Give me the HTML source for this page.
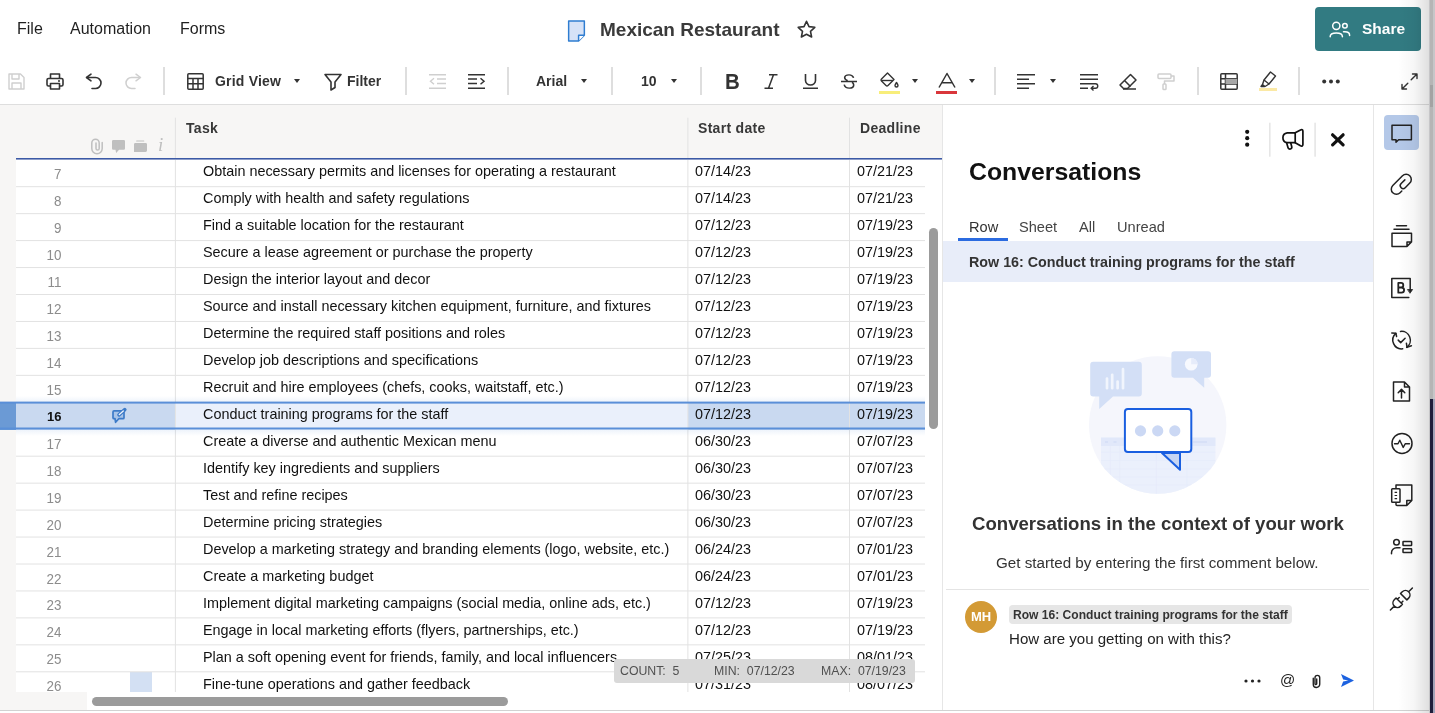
<!DOCTYPE html>
<html>
<head>
<meta charset="utf-8">
<title>Mexican Restaurant</title>
<style>
*{box-sizing:border-box;margin:0;padding:0}
html,body{width:1435px;height:713px;overflow:hidden;background:#fff;font-family:"Liberation Sans",sans-serif;color:#222}
#wrap{position:absolute;left:0;top:0;width:1435px;height:713px;will-change:transform;transform:translateZ(0)}
#top{position:absolute;left:0;top:0;width:1435px;height:105px;background:#fff;border-bottom:1px solid #dedede}
.menu{position:absolute;top:19px;font-size:16px;line-height:19px;color:#1f1f1f;white-space:nowrap}
#title{position:absolute;left:600px;top:18px;font-size:19px;font-weight:bold;line-height:24px;color:#3a3a3a;white-space:nowrap}
#share{position:absolute;left:1315px;top:7px;width:106px;height:44px;background:#327b82;border-radius:4px;color:#fff;font-weight:bold;font-size:15.5px}
#share span{position:absolute;left:47px;top:12px;line-height:19px}
.sep{position:absolute;top:67px;width:2px;height:28px;background:#dedede}
.tbtxt{position:absolute;font-size:14px;font-weight:bold;color:#333;line-height:16px;top:73px;white-space:nowrap}
.caret{position:absolute;top:79px;width:0;height:0;border-left:3.1px solid transparent;border-right:3.1px solid transparent;border-top:4.6px solid #333;margin-left:1px}
svg{position:absolute;overflow:visible}
#gridbg{position:absolute;left:0;top:105px;width:943px;height:606px;background:#f7f6f5}
#gridwhite{position:absolute;left:16px;top:160px;width:909px;height:537px;background:#fff}
.hl{position:absolute;left:16px;height:1px;background:#e4e4e4;width:909px}
.vl{position:absolute;width:1px;background:#e4e4e4}
.rn{transform:scaleY(1.06);transform-origin:0 0;position:absolute;left:16px;width:45.4px;text-align:right;font-size:13.4px;color:#8c8c8c;line-height:15px}
.tk,.d1,.d2{position:absolute;font-size:14.4px;color:#111;line-height:17px;white-space:nowrap}
.tk{left:203px}.d1{left:695px}.d2{left:857px}
.hd{position:absolute;top:120px;font-size:14px;letter-spacing:.3px;font-weight:bold;color:#383838;line-height:16px;white-space:nowrap}
#panel{position:absolute;left:942px;top:105px;width:431px;height:606px;background:#fff}
#rail{position:absolute;left:1373px;top:105px;width:62px;height:606px;background:#fff}
.ptxt{position:absolute;white-space:nowrap}
</style>
</head>
<body>
<div id="wrap">
<div id="top">
  <div class="menu" style="left:17px">File</div>
  <div class="menu" style="left:70px">Automation</div>
  <div class="menu" style="left:180px">Forms</div>
  <!-- sheet icon -->
  <svg style="left:567px;top:20px" width="19" height="22" viewBox="0 0 18 21"><path d="M1.5 1h15v13.5l-5.5 5.5h-9.5z" fill="#d6e2f7" stroke="#2f7dd1" stroke-width="1.4" stroke-linejoin="round"/><path d="M11 20v-5.5h5.5" fill="#fff" stroke="#2f7dd1" stroke-width="1.4" stroke-linejoin="round"/></svg>
  <div id="title">Mexican Restaurant</div>
  <!-- star -->
  <svg style="left:797px;top:20px" width="19" height="18" viewBox="0 0 19 18"><path d="M9.5 1.3l2.5 5.3 5.8.7-4.3 4 1.1 5.7-5.1-2.8-5.1 2.8 1.1-5.7-4.3-4 5.8-.7z" fill="none" stroke="#333" stroke-width="1.6" stroke-linejoin="round"/></svg>
  <div id="share">
    <svg style="left:14px;top:14px" width="22" height="17" viewBox="0 0 22 17" fill="none" stroke="#fff" stroke-width="1.500" stroke-linecap="round"><circle cx="7.300" cy="4.800" r="3.600"/><path d="M1.200 15.700v-.3c0-2.300 2.300-3.500 6.100-3.500s6.100 1.200 6.100 3.500v.3"/><circle cx="15.900" cy="4.800" r="2.300"/><path d="M14.500 10.800h1.400c3 0 4.700 1.300 4.700 3.400v.3"/></svg>
    <span>Share</span>
  </div>
  <!-- save (disabled) -->
  <svg style="left:8px;top:73px" width="17" height="17" viewBox="0 0 17 17" fill="none" stroke="#cfcfcf" stroke-width="1.4" stroke-linejoin="round"><path d="M1 1h11.500l3.500 3.500v11.500h-15z"/><path d="M4 1v5h7v-5"/><path d="M4 16v-6h9v6"/></svg>
  <!-- print -->
  <svg style="left:46px;top:73px" width="18" height="17" viewBox="0 0 18 17" fill="none" stroke="#333" stroke-width="1.600" stroke-linejoin="round"><path d="M4.500 5.500v-4.500h9v4.500"/><rect x="1" y="5.500" width="16" height="7.500" rx="1.500"/><rect x="4.500" y="10.500" width="9" height="5.500" fill="#fff"/><path d="M12 8h2" stroke-width="1.300"/></svg>
  <!-- undo -->
  <svg style="left:85px;top:73px" width="18" height="17" viewBox="0 0 18 17" fill="none" stroke="#333" stroke-width="1.600" stroke-linecap="round" stroke-linejoin="round"><path d="M6 1.200l-4.500 3.300l4.500 3.300"/><path d="M2 4.500h8.500a5.500 5.500 0 0 1 0 11h-3.500"/></svg>
  <!-- redo (disabled) -->
  <svg style="left:124px;top:73px" width="18" height="17" viewBox="0 0 18 17" fill="none" stroke="#cfcfcf" stroke-width="1.500" stroke-linecap="round" stroke-linejoin="round"><path d="M12 1.200l4.500 3.300l-4.500 3.300"/><path d="M16 4.500h-8.500a5.500 5.500 0 0 0 0 11h3.500"/></svg>
  <div class="sep" style="left:163px"></div>
  <!-- grid icon -->
  <svg style="left:187px;top:73px" width="17" height="17" viewBox="0 0 17 17" fill="none" stroke="#333" stroke-width="1.500"><rect x=".8" y=".8" width="15.400" height="15.400" rx="1"/><path d="M.8 5.500h15.400M.8 10.800h15.400M6 5.500v10.700M11 5.500v10.700"/></svg>
  <div class="tbtxt" style="left:215px;letter-spacing:.2px">Grid View</div>
  <div class="caret" style="left:293px"></div>
  <!-- filter -->
  <svg style="left:324px;top:73px" width="18" height="18" viewBox="0 0 18 18" fill="none" stroke="#333" stroke-width="1.600" stroke-linejoin="round"><path d="M1 1.500h16l-6 7.500v5.500l-4 2.500v-8z"/></svg>
  <div class="tbtxt" style="left:347px">Filter</div>
  <div class="sep" style="left:405px"></div>
  <!-- outdent (disabled) -->
  <svg style="left:429px;top:74px" width="17" height="15" viewBox="0 0 17 15" fill="none" stroke="#cfcfcf" stroke-width="1.400"><path d="M0 .7h17M8 5h9M8 9.500h9M0 14.300h17M5 4.300l-3.500 3l3.500 3"/></svg>
  <!-- indent -->
  <svg style="left:468px;top:74px" width="17" height="15" viewBox="0 0 17 15" fill="none" stroke="#333" stroke-width="1.500"><path d="M0 .7h17M0 5h9M0 9.500h9M0 14.300h17M12.500 4.300l3.500 3l-3.500 3"/></svg>
  <div class="sep" style="left:507px"></div>
  <div class="tbtxt" style="left:536px">Arial</div>
  <div class="caret" style="left:580px"></div>
  <div class="sep" style="left:611px"></div>
  <div class="tbtxt" style="left:641px">10</div>
  <div class="caret" style="left:670px"></div>
  <div class="sep" style="left:700px"></div>
  <div class="tbtxt" style="left:725px;top:71px;font-size:22px;line-height:22px;transform:scaleX(.93);transform-origin:0 0">B</div>
  <!-- italic -->
  <svg style="left:764px;top:74px" width="14" height="15" viewBox="0 0 14 15" fill="none" stroke="#333" stroke-width="1.500"><path d="M5 .8h8.500M.5 14.200h8.500M9.500 .8l-5 13.400"/></svg>
  <!-- underline -->
  <svg style="left:803px;top:74px" width="15" height="15" preserveAspectRatio="none" viewBox="0 0 15 17" fill="none" stroke="#333" stroke-width="1.600"><path d="M2.500 0v7.500a5 5 0 0 0 10 0v-7.500M0 16.200h15"/></svg>
  <!-- strike -->
  <svg style="left:841px;top:74px" width="16" height="15" preserveAspectRatio="none" viewBox="0 0 16 17" fill="none" stroke="#333" stroke-width="1.600"><path d="M12.500 4.500c-.5-2.300-2.200-3.500-4.500-3.500c-2.500 0-4.300 1.300-4.300 3.300c0 1.500 1 2.500 3 3.200M3.200 12c.5 2.500 2.300 4 5 4c2.700 0 4.500-1.400 4.500-3.600c0-1.300-.6-2.200-1.700-2.900M0 8.500h16"/></svg>
  <!-- fill -->
  <svg style="left:880px;top:72px" width="20" height="16" viewBox="0 0 20 16" fill="none" stroke="#333" stroke-width="1.400" stroke-linejoin="round"><path d="M7.500 1l6.500 6.500l-6 6c-.6.600-1.400.600-2 0l-4.500-4.500c-.6-.6-.6-1.400 0-2z"/><path d="M1.500 8.500h11.500"/><path d="M16.500 10.500c1 1.500 1.500 2.300 1.500 3a1.500 1.500 0 0 1-3 0c0-.7.500-1.500 1.500-3z"/></svg>
  <div style="position:absolute;left:879px;top:91px;width:21px;height:3px;background:#f8ee7a"></div>
  <div class="caret" style="left:911px"></div>
  <!-- text color A -->
  <svg style="left:938px;top:73px" width="18" height="15" viewBox="0 0 18 15" fill="none" stroke="#333" stroke-width="1.500" stroke-linejoin="round"><path d="M1 14.500l8-14l8 14M4 9.800h10"/></svg>
  <div style="position:absolute;left:936px;top:91px;width:21px;height:3px;background:#d9363b"></div>
  <div class="caret" style="left:968px"></div>
  <div class="sep" style="left:994px"></div>
  <!-- align -->
  <svg style="left:1017px;top:74px" width="18" height="15" viewBox="0 0 18 15" fill="none" stroke="#333" stroke-width="1.400"><path d="M0 .7h18M0 5.200h12M0 9.700h18M0 14.200h12"/></svg>
  <div class="caret" style="left:1049px"></div>
  <!-- wrap -->
  <svg style="left:1080px;top:74px" width="18" height="16" viewBox="0 0 18 16" fill="none" stroke="#333" stroke-width="1.400"><path d="M0 .7h18M0 5.200h18M0 9.700h15.500a2 2 0 0 1 0 4.500h-4M0 14.200h8M13.500 12l-2.300 2.200l2.300 2.200"/></svg>
  <!-- eraser -->
  <svg style="left:1119px;top:73px" width="18" height="17" viewBox="0 0 18 17" fill="none" stroke="#333" stroke-width="1.500" stroke-linejoin="round"><path d="M11.500 1.500l5.500 5.500l-8.500 8.500h-4l-3.500-3.500z"/><path d="M5.500 7.500l6 6M4 16h13"/></svg>
  <!-- paint roller (disabled) -->
  <svg style="left:1157px;top:73px" width="18" height="17" viewBox="0 0 18 17" fill="none" stroke="#cfcfcf" stroke-width="1.500" stroke-linejoin="round"><rect x="1" y="1" width="13" height="4.500" rx="1"/><path d="M14 3h3v5h-9.500v3"/><rect x="6" y="11" width="3" height="5.500" rx=".8"/></svg>
  <div class="sep" style="left:1197px"></div>
  <!-- conditional format table -->
  <svg style="left:1220px;top:73px" width="18" height="17" viewBox="0 0 18 17" fill="none" stroke="#333" stroke-width="1.500"><rect x=".8" y=".8" width="16.400" height="15.400" rx="1"/><path d="M.8 5.800h16.400M.8 11h16.400M5.500 .8v15.400"/><rect x="5.500" y="5.800" width="11.700" height="5.200" fill="#a8a8a8" stroke="none"/></svg>
  <!-- highlighter -->
  <svg style="left:1260px;top:71px" width="17" height="17" viewBox="0 0 17 17" fill="none" stroke="#333" stroke-width="1.400" stroke-linejoin="round"><path d="M10.500 1l5 4l-6.500 8l-5-4z"/><path d="M4 9l-1.500 4.500l2.500 2l4-2.500M2.500 13.500l-1.500 2h3.500"/></svg>
  <div style="position:absolute;left:1259px;top:88px;width:18px;height:3px;background:#fbe9a5"></div>
  <div class="sep" style="left:1298px"></div>
  <svg style="left:1322px;top:79px" width="18" height="5" viewBox="0 0 18 5" fill="#333"><circle cx="2.200" cy="2.500" r="2"/><circle cx="9" cy="2.500" r="2"/><circle cx="15.800" cy="2.500" r="2"/></svg>
  <!-- expand -->
  <svg style="left:1401px;top:73px" width="17" height="17" viewBox="0 0 17 17" fill="none" stroke="#333" stroke-width="1.400" stroke-linecap="round" stroke-linejoin="round"><path d="M11.500 1h4.500v4.500M16 1l-5.800 5.800M5.500 16h-4.500v-4.500M1 16l5.800-5.800"/></svg>
</div>
<div id="gridbg"></div>
<div id="gridwhite"></div>
<svg style="left:0;top:0" width="943" height="160" viewBox="0 0 943 160"><path d="M175.4 117.700V158M687.900 117.700V158M849.500 117.700V158" stroke="#e2e2e2" stroke-width="1" fill="none"/></svg>
<div class="hd" style="left:186px">Task</div>
<div class="hd" style="left:698px">Start date</div>
<div class="hd" style="left:860px">Deadline</div>
<svg style="left:91px;top:138px" width="12" height="16" viewBox="0 0 12 16" fill="none" stroke="#bfbfbf" stroke-width="1.500" stroke-linecap="round"><path d="M11.200 4.500v6a5.200 5.200 0 0 1-10.400 0v-5.500a3.700 3.700 0 0 1 7.400 0v5.500a1.600 1.600 0 0 1-3.200 0v-5.500"/></svg>
<svg style="left:112px;top:140px" width="13" height="13" viewBox="0 0 13 13" fill="#bfbfbf"><path d="M1.200 0h10.600a1.200 1.200 0 0 1 1.200 1.200v7.400a1.200 1.200 0 0 1-1.200 1.200h-4.700l-3 3.200l-.6-3.200h-2.300a1.200 1.200 0 0 1-1.200-1.200v-7.400a1.200 1.200 0 0 1 1.200-1.200z"/></svg>
<svg style="left:134px;top:140px" width="13" height="12" viewBox="0 0 13 12" fill="#bfbfbf"><rect x="2.100" y=".4" width="8.200" height="1.200" rx=".5"/><path d="M1.400 2.900h10.200a1.400 1.400 0 0 1 1.400 1.400v6.300a1.400 1.400 0 0 1-1.400 1.400h-11.600v-7.700a1.400 1.400 0 0 1 1.400-1.400z"/></svg>
<div style="position:absolute;left:158px;top:135px;font-family:'Liberation Serif',serif;font-style:italic;font-size:19px;line-height:20px;color:#bfbfbf">i</div>
<div style="position:absolute;left:16px;top:158px;width:927px;height:1px;background:#3c5aa6"></div>
<div style="position:absolute;left:16px;top:159px;width:927px;height:1px;background:#8d9dc9"></div>
<div style="position:absolute;left:0;top:402px;width:16px;height:28px;background:#6b9ad5"></div>
<div style="position:absolute;left:16px;top:402px;width:159px;height:28px;background:#c9d9f0"></div>
<div style="position:absolute;left:175px;top:402px;width:513px;height:28px;background:#eaf0fb"></div>
<div style="position:absolute;left:688px;top:402px;width:237px;height:28px;background:#c9d9f0"></div>
<div style="position:absolute;left:130px;top:672px;width:22px;height:20px;background:#d3e0f3"></div>
<svg style="left:0;top:0" width="943" height="713" viewBox="0 0 943 713"><path d="M16 186.70H925M16 213.65H925M16 240.60H925M16 267.55H925M16 294.50H925M16 321.45H925M16 348.40H925M16 375.35H925M16 456.20H925M16 483.15H925M16 510.10H925M16 537.05H925M16 564.00H925M16 590.95H925M16 617.90H925M16 644.85H925M16 671.80H925M175.4 160V692M687.9 160V692M849.5 160V692" stroke="#e2e2e2" stroke-width="1" fill="none"/></svg>
<div class="rn" style="top:166px">7</div>
<div class="tk" style="top:163px">Obtain necessary permits and licenses for operating a restaurant</div>
<div class="d1" style="top:163px">07/14/23</div>
<div class="d2" style="top:163px">07/21/23</div>
<div class="rn" style="top:193px">8</div>
<div class="tk" style="top:190px">Comply with health and safety regulations</div>
<div class="d1" style="top:190px">07/14/23</div>
<div class="d2" style="top:190px">07/21/23</div>
<div class="rn" style="top:220px">9</div>
<div class="tk" style="top:217px">Find a suitable location for the restaurant</div>
<div class="d1" style="top:217px">07/12/23</div>
<div class="d2" style="top:217px">07/19/23</div>
<div class="rn" style="top:247px">10</div>
<div class="tk" style="top:244px">Secure a lease agreement or purchase the property</div>
<div class="d1" style="top:244px">07/12/23</div>
<div class="d2" style="top:244px">07/19/23</div>
<div class="rn" style="top:274px">11</div>
<div class="tk" style="top:271px">Design the interior layout and decor</div>
<div class="d1" style="top:271px">07/12/23</div>
<div class="d2" style="top:271px">07/19/23</div>
<div class="rn" style="top:301px">12</div>
<div class="tk" style="top:298px">Source and install necessary kitchen equipment, furniture, and fixtures</div>
<div class="d1" style="top:298px">07/12/23</div>
<div class="d2" style="top:298px">07/19/23</div>
<div class="rn" style="top:328px">13</div>
<div class="tk" style="top:325px">Determine the required staff positions and roles</div>
<div class="d1" style="top:325px">07/12/23</div>
<div class="d2" style="top:325px">07/19/23</div>
<div class="rn" style="top:355px">14</div>
<div class="tk" style="top:352px">Develop job descriptions and specifications</div>
<div class="d1" style="top:352px">07/12/23</div>
<div class="d2" style="top:352px">07/19/23</div>
<div class="rn" style="top:382px">15</div>
<div class="tk" style="top:379px">Recruit and hire employees (chefs, cooks, waitstaff, etc.)</div>
<div class="d1" style="top:379px">07/12/23</div>
<div class="d2" style="top:379px">07/19/23</div>
<div class="rn" style="top:409px;color:#111;font-weight:bold;font-size:13px;transform:scaleY(1)">16</div>
<div class="tk" style="top:406px">Conduct training programs for the staff</div>
<div class="d1" style="top:406px">07/12/23</div>
<div class="d2" style="top:406px">07/19/23</div>
<div class="rn" style="top:436px">17</div>
<div class="tk" style="top:433px">Create a diverse and authentic Mexican menu</div>
<div class="d1" style="top:433px">06/30/23</div>
<div class="d2" style="top:433px">07/07/23</div>
<div class="rn" style="top:463px">18</div>
<div class="tk" style="top:460px">Identify key ingredients and suppliers</div>
<div class="d1" style="top:460px">06/30/23</div>
<div class="d2" style="top:460px">07/07/23</div>
<div class="rn" style="top:490px">19</div>
<div class="tk" style="top:487px">Test and refine recipes</div>
<div class="d1" style="top:487px">06/30/23</div>
<div class="d2" style="top:487px">07/07/23</div>
<div class="rn" style="top:517px">20</div>
<div class="tk" style="top:514px">Determine pricing strategies</div>
<div class="d1" style="top:514px">06/30/23</div>
<div class="d2" style="top:514px">07/07/23</div>
<div class="rn" style="top:544px">21</div>
<div class="tk" style="top:541px">Develop a marketing strategy and branding elements (logo, website, etc.)</div>
<div class="d1" style="top:541px">06/24/23</div>
<div class="d2" style="top:541px">07/01/23</div>
<div class="rn" style="top:571px">22</div>
<div class="tk" style="top:568px">Create a marketing budget</div>
<div class="d1" style="top:568px">06/24/23</div>
<div class="d2" style="top:568px">07/01/23</div>
<div class="rn" style="top:597px">23</div>
<div class="tk" style="top:595px">Implement digital marketing campaigns (social media, online ads, etc.)</div>
<div class="d1" style="top:595px">07/12/23</div>
<div class="d2" style="top:595px">07/19/23</div>
<div class="rn" style="top:624px">24</div>
<div class="tk" style="top:622px">Engage in local marketing efforts (flyers, partnerships, etc.)</div>
<div class="d1" style="top:622px">07/12/23</div>
<div class="d2" style="top:622px">07/19/23</div>
<div class="rn" style="top:651px">25</div>
<div class="tk" style="top:649px">Plan a soft opening event for friends, family, and local influencers</div>
<div class="d1" style="top:649px">07/25/23</div>
<div class="d2" style="top:649px">08/01/23</div>
<div class="rn" style="top:678px">26</div>
<div class="tk" style="top:676px">Fine-tune operations and gather feedback</div>
<div class="d1" style="top:676px">07/31/23</div>
<div class="d2" style="top:676px">08/07/23</div>
<svg style="left:110px;top:405px" width="20" height="20" viewBox="110 405 20 20"><path d="M114 410.900h9.000a1 1 0 0 1 1 1v5.800a1 1 0 0 1-1 1h-4.200l-3.200 3.600l-.6-3.600h-1a1 1 0 0 1-1-1v-5.800a1 1 0 0 1 1-1z" fill="#a9c4e8" stroke="#3d7bc8" stroke-width="1.700" stroke-linejoin="round"/><path d="M119 414.800l5.800-5.200" stroke="#3d7bc8" stroke-width="3.600" stroke-linecap="round"/><path d="M119.300 414.500l4-3.600" stroke="#eef3fb" stroke-width="1.300" stroke-linecap="round"/></svg>
<div style="position:absolute;left:16px;top:396px;width:909px;height:6px;background:linear-gradient(to bottom,rgba(90,143,216,0),rgba(90,143,216,.10))"></div>
<div style="position:absolute;left:16px;top:430px;width:909px;height:6px;background:linear-gradient(to top,rgba(90,143,216,0),rgba(90,143,216,.10))"></div>
<div style="position:absolute;left:0;top:401px;width:925px;height:2px;background:#5a8fd8;transform:translateY(.6px)"></div>
<div style="position:absolute;left:0;top:428px;width:925px;height:2px;background:#5a8fd8;transform:translateY(-.5px)"></div>
<div style="position:absolute;left:16px;top:692px;width:927px;height:19px;background:#fff"></div>
<div style="position:absolute;left:0;top:692px;width:87px;height:19px;background:#f7f6f5"></div>
<div style="position:absolute;left:92px;top:697px;width:416px;height:9px;border-radius:5px;background:#9b9b9b"></div>
<div style="position:absolute;left:925px;top:160px;width:17px;height:551px;background:#fff;"></div>
<div style="position:absolute;left:929px;top:228px;width:9px;height:201px;border-radius:5px;background:#9b9b9b"></div>
<div style="position:absolute;left:614px;top:659px;width:301px;height:24px;background:#d9d9d9;border-radius:3px;font-size:12.300px;color:#505050;line-height:24px;white-space:nowrap"><span style="position:absolute;left:6px">COUNT:&nbsp; 5</span><span style="position:absolute;left:100px">MIN:&nbsp; 07/12/23</span><span style="position:absolute;left:207px">MAX:&nbsp; 07/19/23</span></div>
<div id="panel">
  <div style="position:absolute;left:0;top:0;width:1px;height:606px;background:#e6e6e6"></div>
  <!-- offsets are relative to panel left=942 top=105 -->
  <svg style="left:1240px;top:120px;transform:translate(-942px,-105px)" width="110" height="40" viewBox="1240 120 110 40">
    <g fill="#111"><circle cx="1247.200" cy="131.800" r="2.100"/><circle cx="1247.200" cy="138.200" r="2.100"/><circle cx="1247.200" cy="144.700" r="2.100"/></g>
    <rect x="1269" y="122.700" width="1.600" height="34" fill="#e6e6e6"/>
    <rect x="1314.300" y="122.700" width="1.600" height="34" fill="#e6e6e6"/>
    <g fill="none" stroke="#111" stroke-width="1.700" stroke-linejoin="round" stroke-linecap="round">
      <path d="M1295.200 132.800h-8a5 5 0 0 0 0 9.900h8z"/>
      <path d="M1295.200 132.800l5.300-2.800c1.400-.7 2.400-.1 2.400 1.300v13.200c0 1.400-1 2-2.400 1.300l-5.300-3.100"/>
      <path d="M1286.600 142.800l1.300 4.500c.4 1.500 1.400 2 2.500 1.700c1.100-.3 1.600-1.300 1.300-2.500l-1-3.700"/>
    </g>
    <path d="M1332.600 134.800l10.500 10M1343.100 134.800l-10.500 10" stroke="#111" stroke-width="3.200" stroke-linecap="round"/>
  </svg>
  <div class="ptxt" style="left:27px;top:51px;font-size:24.800px;font-weight:bold;color:#111;line-height:32px">Conversations</div>
  <div class="ptxt" style="left:27px;top:113px;font-size:14.600px;color:#333;line-height:18px">Row</div>
  <div class="ptxt" style="left:77px;top:113px;font-size:14.600px;color:#444;line-height:18px">Sheet</div>
  <div class="ptxt" style="left:137px;top:113px;font-size:14.600px;color:#444;line-height:18px">All</div>
  <div class="ptxt" style="left:175px;top:113px;font-size:14.600px;color:#444;line-height:18px">Unread</div>
  <div style="position:absolute;left:16px;top:133px;width:50px;height:3px;background:#2b6be0"></div>
  <div style="position:absolute;left:1px;top:136px;width:430px;height:41px;background:#e8edf9"></div>
  <div class="ptxt" style="left:27px;top:148px;font-size:14.300px;font-weight:bold;color:#333;line-height:18px">Row 16: Conduct training programs for the staff</div>
  <!--ILLUS-->
  <div class="ptxt" style="left:30px;top:407px;font-size:18.600px;font-weight:bold;color:#333;line-height:24px">Conversations in the context of your work</div>
  <div class="ptxt" style="left:54px;top:449px;font-size:15.200px;color:#333;line-height:18px">Get started by entering the first comment below.</div>
  <div style="position:absolute;left:4px;top:484px;width:423px;height:1px;background:#e4e4e4"></div>
  <div style="position:absolute;left:23px;top:496px;width:32px;height:32px;border-radius:50%;background:#d39a35;color:#fff;font-weight:bold;font-size:13px;line-height:32px;text-align:center">MH</div>
  <div style="position:absolute;left:67px;top:500px;width:283px;height:19px;border-radius:4px;background:#e6e6e6"></div>
  <div class="ptxt" style="left:71px;top:503px;font-size:12.070px;font-weight:bold;color:#333;line-height:15px">Row 16: Conduct training programs for the staff</div>
  <div class="ptxt" style="left:67px;top:525px;font-size:15.070px;color:#222;line-height:18px">How are you getting on with this?</div>
  <svg style="left:302px;top:574px" width="17" height="4" viewBox="0 0 17 4" fill="#222"><circle cx="2" cy="2" r="1.600"/><circle cx="8.500" cy="2" r="1.600"/><circle cx="15" cy="2" r="1.600"/></svg>
  <div class="ptxt" style="left:338px;top:566px;font-size:15px;color:#222;line-height:18px">@</div>
  <svg style="left:370px;top:569px" width="9" height="14" viewBox="0 0 8 13" fill="none" stroke="#222" stroke-width="1.300" stroke-linecap="round"><path d="M1 4v5.500a3 3 0 0 0 6 0v-6a2.200 2.200 0 0 0-4.400 0v5.500a.8.800 0 0 0 1.600 0v-4.500"/></svg>
  <svg style="left:399px;top:569px" width="13" height="13" preserveAspectRatio="none" viewBox="0 0 15 14" fill="#1c62e0"><path d="M0 0l15 7l-15 7l2.500-5.800l6-1.200l-6-1.200z"/></svg>
</div>
<svg style="left:1080px;top:340px" width="160" height="160" viewBox="1080 340 160 160">
  <defs><clipPath id="cc"><circle cx="1157.700" cy="425" r="68.700"/></clipPath></defs>
  <circle cx="1157.700" cy="425" r="68.700" fill="#f5f6fc"/>
  <g clip-path="url(#cc)">
    <rect x="1101" y="437.600" width="114.400" height="60" fill="#ebf0fc"/>
    <rect x="1101" y="437.600" width="114.400" height="8.400" fill="#e1e8fa"/>
    <path d="M1110.400 446v50M1119.800 446v50M1156.400 446v50M1186.700 446v50M1101 452.300h114.400M1101 460.500h114.400M1101 469h114.400M1101 477h114.400M1101 485h114.400" stroke="#e5ebfb" stroke-width=".7" fill="none"/>
    <path d="M1105 442h3M1113.500 442h3M1193 442h14" stroke="#d3ddf6" stroke-width="1.300"/>
  </g>
  <path d="M1093.200 361.800h45.600a3 3 0 0 1 3 3v28.700a3 3 0 0 1-3 3h-25.800l-13.800 12.500v-12.500h-6a3 3 0 0 1-3-3v-28.700a3 3 0 0 1 3-3z" fill="#d3dff6"/>
  <path d="M1107 378.600v9.600M1112.200 374.800v13.400M1117.600 381.500v6.700M1123 369.200v19" stroke="#f1f5fd" stroke-width="2.700" stroke-linecap="round"/>
  <path d="M1174.400 351.200h33.600a3 3 0 0 1 3 3v20.500a3 3 0 0 1-3 3h-3.800v10.100l-11.200-10.100h-18.600a3 3 0 0 1-3-3v-20.500a3 3 0 0 1 3-3z" fill="#d3dff6"/>
  <circle cx="1191.200" cy="364.200" r="6.300" fill="#f7f9fe"/>
  <path d="M1191.200 364.200v-6.300a6.300 6.300 0 0 1 6.300 6.300z" fill="#e6ecfa"/>
  <path d="M1162 452.900l18 16.800v-16.800z" fill="#c6d5f3" stroke="#1a5fe0" stroke-width="2" stroke-linejoin="round"/>
  <rect x="1124.900" y="409" width="66.400" height="42.900" rx="3" fill="#fff" stroke="#1a5fe0" stroke-width="2"/>
  <circle cx="1140.500" cy="430.900" r="5.600" fill="#cbd8f4"/>
  <circle cx="1157.700" cy="430.900" r="5.600" fill="#cbd8f4"/>
  <circle cx="1174.800" cy="430.900" r="5.600" fill="#cbd8f4"/>
</svg>
<div id="rail">
  <div style="position:absolute;left:0;top:0;width:1px;height:606px;background:#e6e6e6"></div>
  <!-- offsets relative to rail left=1373 top=105 -->
  <div style="position:absolute;left:11px;top:10px;width:35px;height:35px;border-radius:4px;background:#b4c8e8"></div>
  <!--RAILICONS-->
</div>
<!-- BOTTOMLINE --><div style="position:absolute;left:0;top:710px;width:1430px;height:1px;background:#d2d2d2"></div><div style="position:absolute;left:0;top:711px;width:1430px;height:2px;background:#fff"></div>
<!-- right edge shadow -->
<svg style="left:1380px;top:110px" width="50" height="520" viewBox="1380 110 50 520" fill="none" stroke="#222" stroke-width="1.500" stroke-linejoin="round" stroke-linecap="round">
  <!-- comment -->
  <path d="M1392 125.300h19.400v14.400h-12.800l-2.600 2.600v-2.600h-4z"/>
  <!-- paperclip rotated -->
  <g transform="translate(1406.140 179.450) rotate(-45)"><path d="M-11.300 5.150L-13.720 5.150A5.150 5.150 0 0 1 -13.720 -5.150L0 -5.150A5.150 5.150 0 0 1 0 5.150L-6.470 5.150A2.880 2.880 0 0 1 -6.470 -.610L-1.190 -.610"/></g>
  <!-- proof -->
  <path d="M1396.500 225.700h10M1394 229.200h15M1392 233.200h19.500v8.700l-4.500 4.500h-15zM1407 246.400v-4.500h4.500"/>
  <!-- B down -->
  <path d="M1410.200 278.600v12M1410.200 278.600h-18.400v18.900h17"/>
  <path d="M1407.800 289.500h4.800l-2.400 3.500z" fill="#222" stroke-width=".8"/>
  <path d="M1398.300 282.900h2.700a2.300 2.300 0 0 1 0 4.600h-2.700zM1398.300 287.500h3.200a2.600 2.600 0 0 1 0 5.200h-3.200z" stroke-width="1.800"/>
  <!-- sync -->
  <path d="M1400.500 331.400A8.800 8.800 0 0 1 1406.650 347.300M1402.700 348.800A8.800 8.800 0 0 1 1395.900 333.400"/>
  <path d="M1406.400 343.200L1407 347.400L1411.400 345.800M1391.800 333.100L1395.900 333.300L1396.600 336.500M1398.200 340.100l2.500 2.500l4.400-4.400"/>
  <!-- upload doc -->
  <path d="M1393.500 382h11l5 5v14h-16zM1404.500 382v5h5M1401.500 398v-8.500M1398.200 392.700l3.300-3.300l3.300 3.300"/>
  <!-- activity -->
  <circle cx="1402" cy="443.400" r="10"/>
  <path d="M1394.500 443.800h3.500l1.800-3.600l3.400 7.200l2-3.600h4.300" stroke-width="1.400"/>
  <!-- summary -->
  <path d="M1396 488.500v-3.500h15.800v15.500l-5 5h-9.800c-.7 0-1-.4-1-1v-2M1406.800 505.500v-5h5"/>
  <rect x="1391.700" y="488.700" width="8.300" height="13.500" rx=".8" fill="#fff"/>
  <path d="M1394.600 492.300h2.500M1394.600 495.500h2.500M1394.600 498.700h2.500" stroke-width="1.200" stroke-linecap="butt"/>
  <!-- contacts -->
  <circle cx="1396.500" cy="542.300" r="2.800"/>
  <path d="M1391.500 553.800v-1a5 5 0 0 1 5-5h3.500"/>
  <rect x="1403" y="541.600" width="8.600" height="3.800" rx=".5"/>
  <rect x="1403" y="548.800" width="8.600" height="3.800" rx=".5"/>
  <!-- plug -->
  <g transform="translate(1401.460 598.930) rotate(-45)"><path d="M3.150 -4.500h2.500a4.500 4.500 0 0 1 0 9h-2.500zM10.150 0h5.300M-3.150 -4.500h-2.500a4.500 4.500 0 0 0 0 9h2.500zM-10.150 0h-5.500M-3.150 -2.600h2.600M-3.150 2.600h2.600"/></g>
</svg>

<div style="position:absolute;left:1398px;top:0;width:32px;height:713px;background:linear-gradient(to right,rgba(0,0,0,0),rgba(0,0,0,.035) 50%,rgba(0,0,0,.13))"></div>
<div style="position:absolute;left:1429px;top:0;width:6px;height:713px;background:#c6c6c8"></div>
<div style="position:absolute;left:1430px;top:0;width:3px;height:713px;background:#b5b5b5"></div>
<div style="position:absolute;left:1430px;top:85px;width:3px;height:22px;background:#a3a3a3"></div>
<div style="position:absolute;left:1433px;top:399px;width:2px;height:314px;background:#a3a3b8"></div>
<div style="position:absolute;left:1430px;top:399px;width:3px;height:314px;background:#1f1e3b"></div>
</div></body></html>
